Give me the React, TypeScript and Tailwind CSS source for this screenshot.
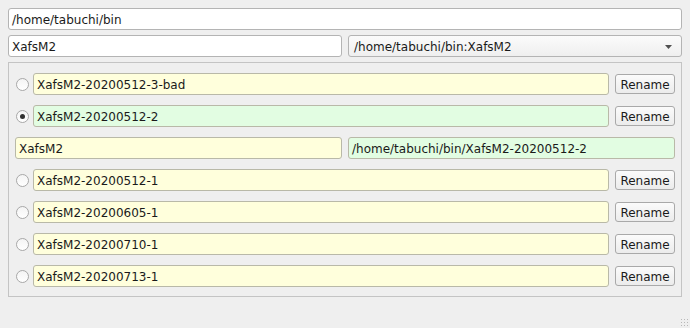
import React from "react";

const font = { fontFamily: '"DejaVu Sans", sans-serif' };

function Radio({ checked }: { checked?: boolean }) {
  return (
    <div className="w-[13px] h-[13px] rounded-full border border-[#a8a8a8] bg-[linear-gradient(#f4f4f4,#ffffff)] flex items-center justify-center shrink-0">
      {checked && <div className="w-[5px] h-[5px] rounded-full bg-[#303030]" />}
    </div>
  );
}

function Field({ text, color, className = "" }: { text: string; color: string; className?: string }) {
  return (
    <div
      className={`h-[22px] min-w-0 border border-[#b9b9a8] rounded-[3px] flex items-center px-[3px] pt-[1px] text-[12px] text-[#1a1a1a] ${className}`}
      style={{ backgroundColor: color }}
    >
      {text}
    </div>
  );
}

function RenameButton() {
  return (
    <div className="w-[60px] h-[20px] border border-[#a9a9a9] rounded-[3px] bg-[linear-gradient(#fbfbfb,#ececec)] flex items-center justify-center pt-[1px] text-[12px] text-[#1a1a1a] shrink-0">
      Rename
    </div>
  );
}

const Y = "#ffffdc";
const G = "#e2fde2";

function Row({ name, color, checked }: { name: string; color: string; checked?: boolean }) {
  return (
    <div className="flex items-center h-[22px] pl-[7px] pr-[6px]">
      <Radio checked={checked} />
      <Field text={name} color={color} className="ml-[4px] flex-1" />
      <div className="ml-[6px]">
        <RenameButton />
      </div>
    </div>
  );
}

export default function App() {
  return (
    <div className="w-[690px] h-[328px] bg-[#efefef] px-[8px] pt-[8px] relative" style={font}>
      <div className="h-[22px] border border-[#b4b4b4] rounded-[3px] bg-white flex items-center px-[3px] pt-[1px] text-[12px] text-[#1a1a1a]">
        /home/tabuchi/bin
      </div>
      <div className="grid grid-cols-2 gap-[6px] mt-[5px]">
        <div className="min-w-0 h-[22px] border border-[#b4b4b4] rounded-[3px] bg-white flex items-center px-[3px] pt-[1px] text-[12px] text-[#1a1a1a]">
          XafsM2
        </div>
        <div className="min-w-0 h-[22px] border border-[#b4b4b4] rounded-[3px] bg-[linear-gradient(#fbfbfb,#efefef)] flex items-center pl-[5px] pr-[9px] pt-[1px] text-[12px] text-[#1a1a1a]">
          <span className="flex-1">/home/tabuchi/bin:XafsM2</span>
          <svg width="7" height="4" viewBox="0 0 7 4">
            <path d="M0 0 L7 0 L3.5 4 Z" fill="#505050" />
          </svg>
        </div>
      </div>
      <div className="mt-[5px] h-[235px] border border-[#c4c4c4] flex flex-col gap-[10px] pt-[10px]">
        <Row name="XafsM2-20200512-3-bad" color={Y} />
        <Row name="XafsM2-20200512-2" color={G} checked />
        <div className="grid grid-cols-2 gap-[6px] pl-[6px] pr-[6px]">
          <Field text="XafsM2" color={Y} />
          <Field text="/home/tabuchi/bin/XafsM2-20200512-2" color={G} />
        </div>
        <Row name="XafsM2-20200512-1" color={Y} />
        <Row name="XafsM2-20200605-1" color={Y} />
        <Row name="XafsM2-20200710-1" color={Y} />
        <Row name="XafsM2-20200713-1" color={Y} />
      </div>
      <div className="absolute right-[2px] bottom-[2px] w-[8px] h-[8px] bg-[radial-gradient(#b8b8b8_0.6px,transparent_0.8px)] bg-[length:3px_3px]" />
    </div>
  );
}
